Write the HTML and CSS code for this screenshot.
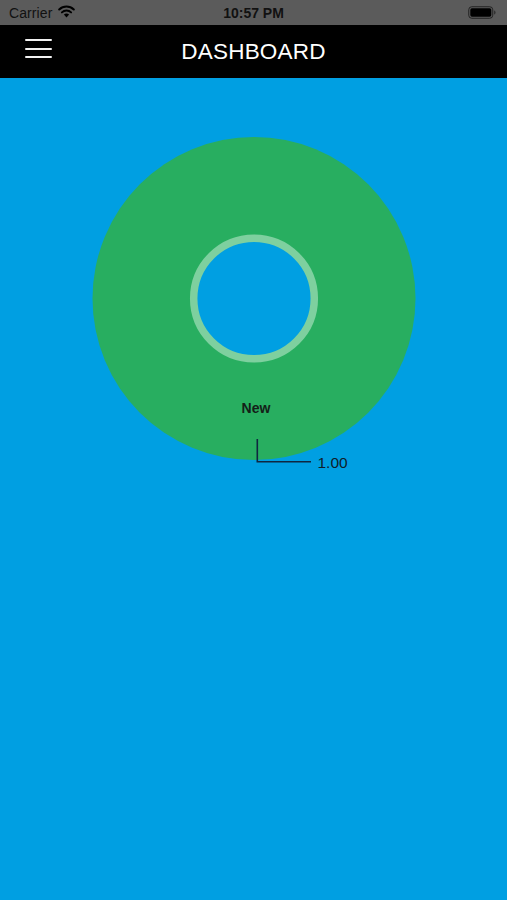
FILE: index.html
```
<!DOCTYPE html>
<html>
<head>
<meta charset="utf-8">
<title>Dashboard</title>
<link rel="stylesheet" href="styles.css">
</head>
<body>
<div class="app">
  <div class="statusbar">
    <div class="sb-left">
      <span class="carrier">Carrier</span>
      <svg class="wifi" width="17" height="13" viewBox="0 0 17 13">
        <path d="M8.5 12.5 L5.9 9.6 A3.8 3.8 0 0 1 11.1 9.6 Z" fill="#000"/>
        <path d="M3.9 7.4 A6.6 6.6 0 0 1 13.1 7.4" fill="none" stroke="#000" stroke-width="2" stroke-linecap="round"/>
        <path d="M1.2 4.5 A10.4 10.4 0 0 1 15.8 4.5" fill="none" stroke="#000" stroke-width="2" stroke-linecap="round"/>
      </svg>
    </div>
    <div class="sb-time">10:57 PM</div>
    <div class="sb-right">
      <svg class="battery" width="28" height="13" viewBox="0 0 28 13">
        <rect x="0.75" y="0.75" width="24" height="11.5" rx="3" fill="none" stroke="#222" stroke-width="1"/>
        <rect x="2.3" y="2.3" width="21" height="8.4" rx="1.6" fill="#000"/>
        <path d="M26 4.5 a1.6 2 0 0 1 0 4 Z" fill="#333"/>
      </svg>
    </div>
  </div>
  <header class="navbar">
    <button class="menu-btn" aria-label="Menu">
      <span class="bar"></span><span class="bar"></span><span class="bar"></span>
    </button>
    <h1 class="title">DASHBOARD</h1>
  </header>
  <main class="content">
    <svg class="chart" width="507" height="822" viewBox="0 0 507 822">
      <circle cx="254" cy="220.5" r="161.5" fill="#28ae60"/>
      <circle cx="254" cy="220.5" r="60.3" fill="#009fe2" stroke="#7ed09f" stroke-width="7.5"/>
      <text x="256" y="334.5" text-anchor="middle" class="slice-label">New</text>
      <polyline points="257.3,361 257.3,383.8 311,383.8" fill="none" stroke="#0f2740" stroke-width="1.6"/>
      <text x="317.5" y="389.5" class="value-label">1.00</text>
    </svg>
  </main>
</div>
</body>
</html>
```
FILE: styles.css
```
html, body {
  margin: 0;
  padding: 0;
  background: #009fe2;
}
body {
  font-family: "Liberation Sans", Arial, sans-serif;
}
.app {
  width: 507px;
  min-height: 900px;
  display: flex;
  flex-direction: column;
}
.statusbar {
  height: 25px;
  background: #5b5b5b;
  display: flex;
  align-items: center;
  justify-content: space-between;
  position: relative;
  padding: 0 8px 0 9px;
  box-sizing: border-box;
}
.sb-left {
  display: flex;
  align-items: center;
  gap: 6px;
}
.carrier {
  font-size: 14px;
  color: #111;
  letter-spacing: 0.1px;
}
.wifi {
  display: block;
  margin-top: -2px;
}
.sb-time {
  position: absolute;
  left: 0;
  right: 0;
  text-align: center;
  font-size: 14px;
  font-weight: bold;
  color: #111;
  pointer-events: none;
}
.sb-right {
  display: flex;
  align-items: center;
}
.battery {
  display: block;
  margin-right: 3px;
}
.navbar {
  height: 53px;
  background: #000;
  display: flex;
  align-items: center;
  position: relative;
}
.menu-btn {
  background: none;
  border: 0;
  padding: 0;
  margin-left: 25px;
  margin-top: -6px;
  width: 27px;
  display: flex;
  flex-direction: column;
  gap: 6.3px;
  cursor: pointer;
}
.menu-btn .bar {
  display: block;
  height: 2px;
  background: #f2f2f2;
  border-radius: 1px;
}
.title {
  position: absolute;
  left: 0;
  right: 0;
  margin: 0;
  margin-top: 1px;
  text-align: center;
  color: #fff;
  font-weight: normal;
  font-size: 22.5px;
  letter-spacing: 0.2px;
  pointer-events: none;
}
.content {
  flex: 1;
  background: #009fe2;
}
.chart {
  display: block;
}
.slice-label {
  font-family: "Liberation Sans", Arial, sans-serif;
  font-weight: bold;
  font-size: 14px;
  fill: #142018;
}
.value-label {
  font-family: "Liberation Sans", Arial, sans-serif;
  font-size: 15.5px;
  fill: #0f1d2a;
}
```
